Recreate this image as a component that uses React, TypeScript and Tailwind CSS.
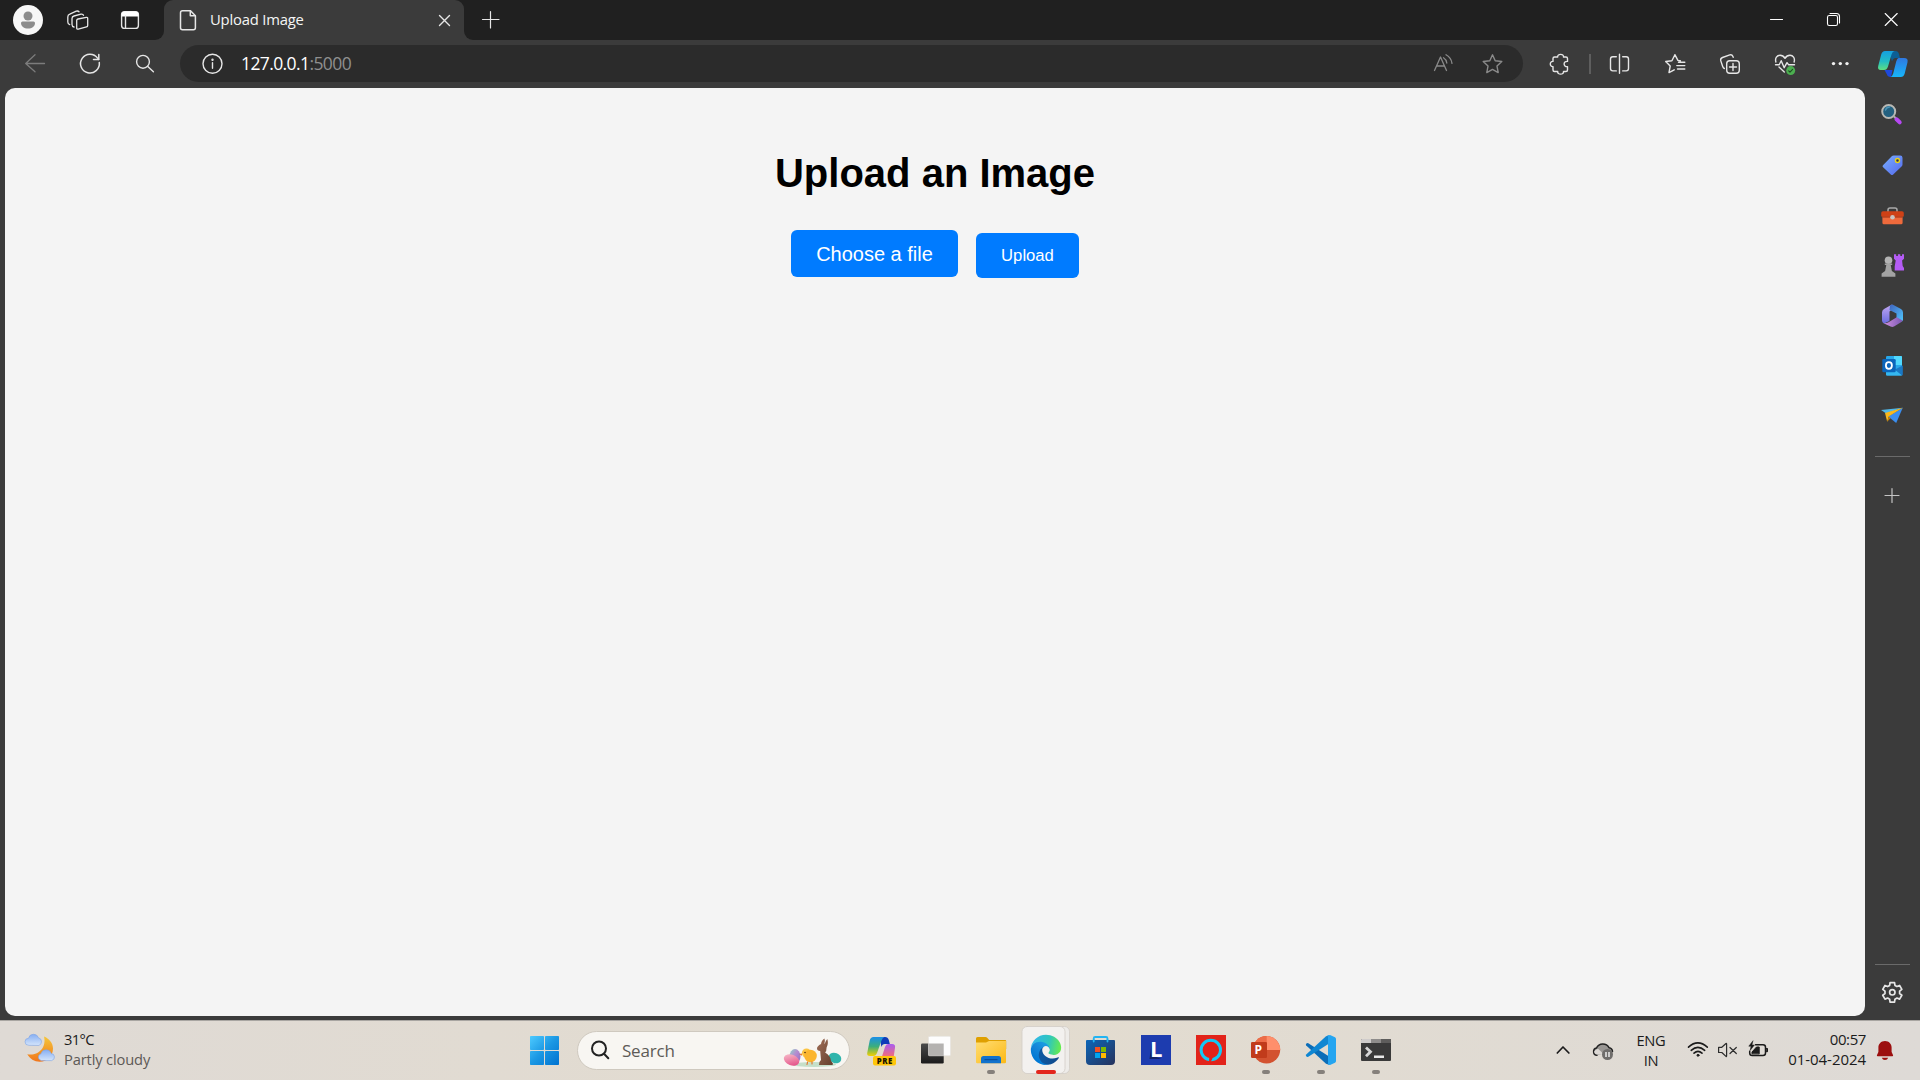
import React from "react";

type CellProps = {
  box: [number, number, number, number];
  color?: string;
  sw?: number;
  children: React.ReactNode;
};

// Icon cell drawn in screen units; it takes part in the flow as a fixed-size block.
function Cell({ box, color = "#e6e6e6", sw = 1.4, children }: CellProps) {
  return (
    <svg
      className="block shrink-0"
      width={box[2]}
      height={box[3]}
      viewBox={box.join(" ")}
      fill="none"
      stroke={color}
      strokeWidth={sw}
      strokeLinecap="round"
      strokeLinejoin="round"
    >
      {children}
    </svg>
  );
}

function gearPath(cx: number, cy: number) {
  const pts: string[] = [];
  for (let k = 0; k < 6; k++) {
    const spec: [number, number][] = [
      [-21, 7.4],
      [-13, 10],
      [13, 10],
      [21, 7.4],
    ];
    for (const [d, r] of spec) {
      const a = ((k * 60 + d - 90) * Math.PI) / 180;
      pts.push(`${(cx + r * Math.cos(a)).toFixed(2)} ${(cy + r * Math.sin(a)).toFixed(2)}`);
    }
  }
  return `M${pts.join("L")}z`;
}

function TabBar() {
  return (
    <div className="flex h-10 bg-[#202020]">
      <Cell box={[0, 0, 52, 40]}>
        <circle cx="28" cy="20" r="15" fill="#f7f7f7" stroke="none" />
        <circle cx="28" cy="16" r="4.5" fill="#8c8c8c" stroke="none" />
        <path d="M21 23a1.5 1.5 0 0 1 1.5-1.5h11A1.5 1.5 0 0 1 35 23c0 3.5-3 5.5-7 5.5s-7-2-7-5.5z" fill="#8c8c8c" stroke="none" />
      </Cell>
      <Cell box={[52, 0, 52, 40]} sw={1.3}>
        <path d="M78 19l8.3-1.6q1.4-.2 1.4 1.1v6.9q0 1.2-1.2 1.5l-8.2 2.2q-1.6.3-1.6-1.2v-7.4q0-1.2 1.3-1.5z" />
        <path d="M74 27q-2-.5-2-2.5v-6q0-2 2-2.5l7-1.9q2-.3 2.5 1.2" />
        <path d="M69.7 24.6q-1.9-.6-1.9-2.6v-5q0-2 2-2.8l6.5-3q1.7-.6 2.7.5" />
      </Cell>
      <Cell box={[104, 0, 50, 40]}>
        <rect x="121.6" y="11.6" width="16.8" height="16.8" rx="3" />
        <path d="M121.5 16.5v-2a3 3 0 0 1 3-3h11a3 3 0 0 1 3 3v2z" fill="#fff" stroke="none" />
        <path d="M125.5 16v12" />
      </Cell>
      <div className="h-10 w-2.5 bg-[#3b3b3b]">
        <div className="h-10 w-2.5 rounded-br-[9px] bg-[#202020]" />
      </div>
      <div className="flex h-10 w-[300px] rounded-t-[9px] bg-[#3b3b3b]">
        <Cell box={[164, 0, 46, 40]} sw={1.5}>
          <path d="M182.5 10.7h8l4.9 5v12a2 2 0 0 1-2 2h-10.9a2 2 0 0 1-2-2v-15a2 2 0 0 1 2-2z" />
          <path d="M190.3 11v4.7h4.8" />
        </Cell>
        <span className="w-[214px] pt-2 text-[14.8px] leading-[22px] tracking-[-0.2px] text-[#f5f5f5]">Upload Image</span>
        <Cell box={[424, 0, 40, 40]}>
          <path d="M439.5 15.5l10 10M449.5 15.5l-10 10" />
        </Cell>
      </div>
      <div className="h-10 w-2.5 bg-[#3b3b3b]">
        <div className="h-10 w-2.5 rounded-bl-[9px] bg-[#202020]" />
      </div>
      <Cell box={[474, 0, 34, 40]} sw={1.2}>
        <path d="M482.5 19.5h16.5M490.5 11.5V28" />
      </Cell>
      <div className="flex-1" />
      <Cell box={[1750, 0, 56, 40]} color="#fff" sw={1.1}>
        <path d="M1770.5 19.5h12" />
      </Cell>
      <Cell box={[1806, 0, 57, 40]} color="#fff" sw={1.1}>
        <rect x="1827.5" y="15.5" width="10" height="10" rx="1.8" />
        <path d="M1830 13.5h6.5q3 0 3 3v6.5" />
      </Cell>
      <Cell box={[1863, 0, 57, 40]} color="#fff" sw={1.1}>
        <path d="M1885.2 13.5l12 12M1897.2 13.5l-12 12" />
      </Cell>
    </div>
  );
}

function Toolbar() {
  return (
    <div className="flex h-12 items-center">
      <Cell box={[0, 40, 63, 48]} color="#7c7c7c" sw={1.3}>
        <path d="M44.5 63.5H26M35 54.8l-9.3 8.7 9.3 8.2" />
      </Cell>
      <Cell box={[63, 40, 55, 48]} sw={1.5}>
        <path d="M99.3 62.5a9.4 9.4 0 1 1-1.7-4.4l1 1.3" />
        <path d="M98.8 54.5v5h-5.3" />
      </Cell>
      <Cell box={[118, 40, 62, 48]} sw={1.4}>
        <circle cx="143" cy="61.8" r="6.4" />
        <path d="M147.8 66.5l5.6 5.2" />
      </Cell>
      <div className="mb-[1px] flex h-[37px] w-[1343px] items-center rounded-full bg-[#2b2b2b]">
        <Cell box={[180, 45, 61, 37]} sw={1.4}>
          <circle cx="212.5" cy="63.7" r="9.5" />
          <path d="M212.5 62.8v5.4" />
          <circle cx="212.5" cy="59.7" r=".5" fill="#e6e6e6" />
        </Cell>
        <div className="flex-1 pb-px text-[17.5px] leading-[24px] tracking-[-0.6px] text-white">
          127.0.0.1<span className="text-[#8f8f8f]">:5000</span>
        </div>
        <Cell box={[1418, 45, 50, 37]} color="#8a8a8a" sw={1.3}>
          <path d="M1434.5 70.5l6-13.5 6 13.5M1436.7 66h7.6M1443.5 57.8q2.8 1.6 3.3 5.2M1446 54.8q5.3 3 6 8.5" />
        </Cell>
        <Cell box={[1468, 45, 55, 37]} color="#8a8a8a" sw={1.4}>
          <path d="M1492.5 54.8l2.7 5.9 6.6.8-4.8 4.6 1.2 6.5-5.7-3.2-5.7 3.2 1.2-6.5-4.8-4.6 6.6-.8z" />
        </Cell>
      </div>
      <Cell box={[1523, 40, 66, 48]}>
        <path d="M1554.500 57h3.200c-.6-3.500 6.400-3.500 5.800 0h2.500q1.500 0 1.500 1.500v2.900c-4.500-.4-4.500 5.600 0 5.200v3.400q0 1.500-1.500 1.500h-2.500c.6 3.500-6.400 3.500-5.800 0h-3.200q-1.500 0-1.500-1.500v-3.400c-3.600.4-3.600-5.600 0-5.200v-2.900q0-1.500 1.500-1.500z" />
      </Cell>
      <div className="h-5 w-[2px] bg-[#5e5e5e]" />
      <Cell box={[1591, 40, 56, 48]}>
        <path d="M1616.3 56.7h-3.5q-2.3 0-2.3 2.3v9.6q0 2.3 2.3 2.3h3.5M1622.7 56.7h3.5q2.3 0 2.3 2.3v9.6q0 2.3-2.3 2.3h-3.5M1619.5 54.3v19" />
      </Cell>
      <Cell box={[1647, 40, 55, 48]}>
        <path d="M1680.300 60.800l-2.400-.400-3-5.700-3 6-6.200.800 4.500 4.500-1.200 6.600 5.200-2.800M1678.500 62.200h6.300M1676.800 65.600h8M1677.500 69h7.300" />
      </Cell>
      <Cell box={[1702, 40, 55, 48]}>
        <rect x="1726.7" y="60.7" width="12.6" height="12.6" rx="3" />
        <path d="M1733 63.5v7M1729.5 67h7M1724.4 68.5q-1.2-.6-1.7-2l-1.9-5.6q-.7-2.5 1.7-3.4l7.3-2.6q2.2-.6 3 1.4l.4 1" />
      </Cell>
      <Cell box={[1757, 40, 55, 48]}>
        <path d="M1775.9 62c-1.2-4 1.2-6.7 4.1-6.7 2.4 0 4 1.4 5 3 1-1.6 2.6-3 5-3 2.900 0 5.300 2.700 4.100 6.700M1775.500 64.700h3.700l2-4 3 7 2.800-5 1.500 2h6M1779 67l5.300 5" />
        <circle cx="1790.7" cy="70.6" r="4.5" fill="#4caf50" stroke="none" />
        <path d="M1788.700 70.800l1.300 1.400 2.600-2.800" stroke="#1f4d22" strokeWidth="1.100" />
      </Cell>
      <Cell box={[1812, 40, 53, 48]}>
        <g fill="#f0f0f0" stroke="none">
          <circle cx="1833.5" cy="63.6" r="1.7" />
          <circle cx="1840.3" cy="63.6" r="1.7" />
          <circle cx="1847" cy="63.6" r="1.7" />
        </g>
      </Cell>
      <Cell box={[1865, 40, 55, 48]}>
        <defs>
          <linearGradient id="cpA" x1="0" y1="0" x2="0" y2="1">
            <stop offset="0" stopColor="#159fe0" />
            <stop offset=".55" stopColor="#22bcc4" />
            <stop offset="1" stopColor="#5fe07f" />
          </linearGradient>
          <linearGradient id="cpB" x1="0" y1="0" x2="0" y2="1">
            <stop offset="0" stopColor="#2f78e0" />
            <stop offset="1" stopColor="#17b6fb" />
          </linearGradient>
        </defs>
        <g stroke="none">
          <path d="M1889 51h6.500q2.700 0 3.500 3l1 4h-4.500q-2.500 0-3.500 3.500z" fill="#0c5f95" />
          <path d="M1884.500 70h8l-1.500 7h-.5q-3 0-3.800-3z" fill="#1e49dc" />
          <path d="M1885 51h9.500q-2 .3-3 3.500l-3.500 12q-1.100 3.500-4 3.500h-3.300q-3.400 0-2.500-4l3-11.500q1-3.500 3.800-3.500z" fill="url(#cpA)" />
          <path d="M1898.500 58h5.500q4.400 0 3.500 4.200l-2.800 11.300q-1 3.500-4 3.500h-10.200q1.800-.5 2.700-3.500l3-12q1-3.500 2.300-3.500z" fill="url(#cpB)" />
        </g>
      </Cell>
    </div>
  );
}

function Sidebar() {
  return (
    <div className="flex w-[55px] flex-col">
      <Cell box={[1865, 88, 55, 52]}>
        <circle cx="1888.700" cy="111.500" r="6.500" fill="#23607f" stroke="#b8b8b4" strokeWidth="2" />
        <path d="M1885.500 110q1-3 4-3" stroke="#4c93b5" />
        <path d="M1894 116.500l2 2" stroke="#aaa" strokeWidth="2" />
        <path d="M1896.500 119.300l3.200 3" stroke="#b648f2" strokeWidth="4" />
      </Cell>
      <Cell box={[1865, 140, 55, 51]}>
        <defs>
          <linearGradient id="tag" x1="0" y1="0" x2="1" y2="1">
            <stop offset="0" stopColor="#79b0ff" />
            <stop offset="1" stopColor="#5468ec" />
          </linearGradient>
        </defs>
        <path d="M1883 165.300l9-9.200q.7-.7 1.700-.7h6.500q2.300 0 2.300 2.300v6.800q0 1-.7 1.700l-8.600 8.300q-1.200 1-2.400 0l-7.700-7.200q-1.200-1-.1-2z" fill="url(#tag)" stroke="none" />
        <circle cx="1897.500" cy="160.500" r="2" fill="#2e3554" stroke="#ead21a" />
      </Cell>
      <Cell box={[1865, 191, 55, 50]}>
        <path d="M1888 211.500v-1.500q0-2 2-2h5q2 0 2 2v1.500" stroke="#a9a9a9" strokeWidth="1.500" />
        <g stroke="none">
          <rect x="1882.400" y="212" width="20.200" height="12.200" rx="1.500" fill="#ee6a3c" />
          <path d="M1881.200 213q0-1.800 1.800-1.800h19q1.800 0 1.800 1.800v3.500h-22.600z" fill="#cf4116" />
          <path d="M1882.400 216.500h20.200v1h-20.200z" fill="#9d2f10" />
          <circle cx="1892.500" cy="217.200" r="2.300" fill="#c9c5c2" />
        </g>
      </Cell>
      <Cell box={[1865, 241, 55, 50]}>
        <g stroke="none">
          <path d="M1894 254.300h2.200v1.600h1.700v-1.600h2.400v1.600h1.700v-1.600h2v4.500l-1.900 1.600.6 5.600 1.300 2v2.500h-9.300v-4l1-6-1.700-1.700z" fill="#b45cf5" />
          <circle cx="1888.500" cy="260.300" r="3.800" fill="#b4b4b4" />
          <path d="M1884.800 263.500h7.400v1.500h-1.500l1.200 6 3.500 2.500v3.200h-13.800v-3.200l3.500-2.500 1.200-6h-1.500z" fill="#a3a3a3" />
        </g>
      </Cell>
      <Cell box={[1865, 291, 55, 50]}>
        <defs>
          <linearGradient id="mA" x1="0" y1="0" x2="0" y2="1">
            <stop offset="0" stopColor="#c3a8f2" />
            <stop offset="1" stopColor="#6a6be0" />
          </linearGradient>
          <linearGradient id="mB" x1="0" y1="0" x2="1" y2="1">
            <stop offset="0" stopColor="#3f62bd" />
            <stop offset="1" stopColor="#50c8ff" />
          </linearGradient>
          <linearGradient id="mC" x1="0" y1="0" x2="1" y2="0">
            <stop offset="0" stopColor="#d08fe0" />
            <stop offset="1" stopColor="#7a58b4" />
          </linearGradient>
        </defs>
        <g stroke="none">
          <path d="M1892 304.500l-8 4.500q-2 1-2 3.500v8q0 2 2 3l5.500-2.500v-9.500l4-3.500z" fill="url(#mA)" />
          <path d="M1890 305.200l2.500-.8 8.500 4.600q2 1.200 2 3.500v7.500q-.3 1.300-1.500 1.600l-5-3v-5.200l-7-3.500z" fill="url(#mB)" />
          <path d="M1883.500 323.200q3 .2 5-1l8.300-4.900 5.800 3.200q0 .8-1.600 1.800l-7 4.200q-1.700.9-3.400 0z" fill="url(#mC)" />
        </g>
      </Cell>
      <Cell box={[1865, 341, 55, 50]}>
        <g stroke="none">
          <rect x="1886" y="356" width="16" height="19.500" rx="1.200" fill="#28a8ea" />
          <path d="M1894 356h7q1 0 1 1v8h-8z" fill="#50d9ff" />
          <path d="M1894 370l8.800-4.500v9q0 1-1 1z" fill="#1a78c4" />
          <path d="M1886 368l8 1 8 6.500h-15q-1 0-1-1z" fill="#35b8f1" />
          <rect x="1882.300" y="359" width="13.400" height="13.300" rx="1.300" fill="#0b65bb" />
        </g>
        <ellipse cx="1888.900" cy="365.500" rx="3" ry="3.300" stroke="#fff" strokeWidth="1.800" />
      </Cell>
      <Cell box={[1865, 391, 55, 50]}>
        <g stroke="none">
          <path d="M1881 410l21.800-2.200-16.500 5.800z" fill="#4fb7e8" />
          <path d="M1902.800 407.800l-6.600 15.200-8-6.500z" fill="#3a8ef0" />
          <path d="M1902.800 407.800l-17.800 5.200 2.200 8.800 1.500-5.300z" fill="#f9b81c" />
          <path d="M1888.700 416.500l2 1.600-3.500 3.700z" fill="#c98308" />
        </g>
      </Cell>
      <div className="mx-2.5 mt-[15px] h-px bg-[#6a6a6a]" />
      <Cell box={[1865, 457, 55, 78]} color="#c4c4c4" sw={1.200}>
        <path d="M1885 495.500h14M1892 488.500v14" />
      </Cell>
      <div className="flex-1" />
      <div className="mx-2.5 h-px bg-[#6a6a6a]" />
      <Cell box={[1865, 965, 55, 55]} sw={1.700}>
        <path d={gearPath(1892.300, 992.300)} />
        <circle cx="1892.300" cy="992.300" r="2.700" />
      </Cell>
    </div>
  );
}

function Page() {
  return (
    <main className="ml-[5px] flex h-[928px] w-[1860px] flex-col items-center rounded-[10px] bg-[#f4f4f4] [font-family:'Liberation_Sans',Arial,sans-serif]">
      <h1 className="mt-[62px] text-[40px] leading-[46px] font-bold text-black">Upload an Image</h1>
      <div className="mt-[34px] flex gap-[18px] text-white">
        <button className="h-[47px] w-[167px] rounded-[6px] bg-[#007bff] pt-[2px] text-[20px] leading-[23px]">Choose a file</button>
        <button className="mt-[3px] h-[45px] w-[103px] rounded-[6px] bg-[#007bff] text-[16.670px] leading-5">Upload</button>
      </div>
    </main>
  );
}

function Indicator({ cx }: { cx: number }) {
  return <rect x={cx - 4} y="1070" width="8" height="4" rx="2" fill="#85807b" stroke="none" />;
}

function Taskbar() {
  return (
    <div className="flex h-[60px] w-[1920px] border-t border-[#a9a6a2] bg-linear-to-r from-[#dfdad5] via-[#e3dccf] to-[#dedad6] text-[#1b1b1b]">
      <Cell box={[0, 1021, 64, 59]}>
        <defs>
          <linearGradient id="moon" x1="0" y1="0" x2="0" y2="1">
            <stop offset="0" stopColor="#f5c63a" />
            <stop offset="1" stopColor="#f0761c" />
          </linearGradient>
          <linearGradient id="cloud" x1="0" y1="0" x2="0" y2="1">
            <stop offset="0" stopColor="#86aef2" />
            <stop offset="1" stopColor="#d3e4fb" />
          </linearGradient>
        </defs>
        <path d="M44 1036.500c5 2 9 6.500 9 12 0 7.500-6 13.200-13.200 13.200-5.500 0-10-3-12.500-7.500 10.500 2 19.500-6 16.700-17.700z" fill="url(#moon)" stroke="none" />
        <path d="M28.500 1045.300a3.500 3.500 0 0 1 0-7 5.200 5.200 0 0 1 10-.5 4 4 0 0 1 .8 7.500z" fill="url(#cloud)" stroke="#7fa4e4" strokeWidth=".6" />
        <path d="M41 1060.500a3.500 3.500 0 0 1 0-6.800 5.300 5.300 0 0 1 10.200-.2 3.600 3.600 0 0 1 .8 7z" fill="url(#cloud)" stroke="#7fa4e4" strokeWidth=".6" />
      </Cell>
      <div className="w-[453px] pt-[8px] text-[14.700px] leading-[20px]">
        <div className="tracking-[-0.600px]">31°C</div>
        <div className="tracking-[-0.150px] text-[#5d5956]">Partly cloudy</div>
      </div>
      <Cell box={[517, 1021, 60, 59]}>
        <defs>
          <linearGradient id="win" gradientUnits="userSpaceOnUse" x1="530" y1="1036" x2="559" y2="1065">
            <stop offset="0" stopColor="#4dcaff" />
            <stop offset=".5" stopColor="#1a97e3" />
            <stop offset="1" stopColor="#0072d0" />
          </linearGradient>
        </defs>
        <g fill="url(#win)" stroke="none">
          <rect x="530" y="1036" width="14" height="14" rx=".8" />
          <rect x="545" y="1036" width="14" height="14" rx=".8" />
          <rect x="530" y="1051" width="14" height="14" rx=".8" />
          <rect x="545" y="1051" width="14" height="14" rx=".8" />
        </g>
      </Cell>
      <div className="mt-[10px] flex h-[39px] w-[273px] items-center rounded-full border border-[#cfc9bf] bg-[#f8f6f2]">
        <Cell box={[578, 1032, 44, 37]} color="#222" sw={2}>
          <circle cx="599" cy="1048.500" r="7" />
          <path d="M604 1053.700l4.300 4.500" />
        </Cell>
        <span className="flex-1 text-[17px] leading-6 tracking-[-0.200px] text-[#5e5b57]">Search</span>
        <Cell box={[780, 1032, 69, 37]}>
          <defs>
            <linearGradient id="eggA" x1="0" y1="0" x2="1" y2="1">
              <stop offset="0" stopColor="#8ed6c8" />
              <stop offset=".45" stopColor="#b58bd0" />
              <stop offset="1" stopColor="#8d6cc0" />
            </linearGradient>
            <linearGradient id="eggB" x1="0" y1="0" x2="1" y2="1">
              <stop offset="0" stopColor="#f9c6cf" />
              <stop offset="1" stopColor="#e0407e" />
            </linearGradient>
            <linearGradient id="bunny" x1="0" y1="0" x2="1" y2="1">
              <stop offset="0" stopColor="#a06d55" />
              <stop offset="1" stopColor="#63402f" />
            </linearGradient>
          </defs>
          <g stroke="none">
            <ellipse cx="814" cy="1064.500" rx="22" ry="2.500" fill="#c5dfca" />
            <ellipse cx="795" cy="1056.500" rx="5.500" ry="7.500" fill="url(#eggA)" />
            <ellipse cx="791.500" cy="1060" rx="8" ry="5.300" transform="rotate(20 791.500 1060)" fill="url(#eggB)" />
            <ellipse cx="835" cy="1058" rx="6.500" ry="5" transform="rotate(20 835 1058)" fill="#2fb5ac" />
            <circle cx="806.500" cy="1053" r="4.600" fill="#fcc443" />
            <ellipse cx="810.500" cy="1056" rx="6.300" ry="6.200" fill="#fbb52e" />
            <path d="M801.800 1053.500l-2.600.6 2.800 1.600z" fill="#e2691a" />
            <circle cx="805" cy="1052.500" r=".8" fill="#4a2a10" />
          </g>
          <path d="M807.500 1062l-.5 2.500M812 1062v2" stroke="#e2691a" strokeWidth="1" />
          <path d="M819 1065q-.5-3 2-5l-.8-9q-3.200-.5-3.200-2.500 0-2.500 4-4.500.5-4 3.500-5.500 1 3-.2 5.500l.5-.5q1.200-3.500 2.500-4.500 1.500 4.500-.7 8.500 0 3.500-1.500 5 5.500 3 6 8.500l1.800 2.500q.3 1.500-1 1.500z" fill="url(#bunny)" stroke="none" />
        </Cell>
      </div>
      <Cell box={[850, 1021, 59, 59]}>
        <defs>
          <linearGradient id="cpC" x1="0" y1="0" x2="0" y2="1">
            <stop offset="0" stopColor="#1a8fe8" />
            <stop offset=".5" stopColor="#3cae7c" />
            <stop offset="1" stopColor="#f5d000" />
          </linearGradient>
          <linearGradient id="cpD" x1="0" y1="0" x2="0" y2="1">
            <stop offset="0" stopColor="#a95cf0" />
            <stop offset="1" stopColor="#fb6f6b" />
          </linearGradient>
        </defs>
        <g stroke="none">
          <path d="M880 1037h5q3 0 3.800 3l1 4h-5q-2.500 0-3.500 3z" fill="#0f3bb8" />
          <path d="M873.500 1037h11q-2 .5-3 3.500l-4.300 12q-1.200 3.500-4 3.500h-3.200q-3.500 0-2.700-3.500l2.400-12q.8-3.500 3.800-3.500z" fill="url(#cpC)" />
          <path d="M888 1044h4q3.700 0 3 3.700l-1.500 10.300h-12l3.500-11q1-3 3-3z" fill="url(#cpD)" />
          <rect x="873" y="1056" width="23" height="9.500" rx="2" fill="#ffc60a" />
          <text x="884.800" y="1063.500" fontSize="7.800" fontWeight="800" textAnchor="middle" letterSpacing=".5" fill="#1c1600" className="[font-family:'Open_Sans',sans-serif]">PRE</text>
        </g>
      </Cell>
      <Cell box={[909, 1021, 55, 59]}>
        <defs>
          <linearGradient id="tvD" x1="0" y1="0" x2="0" y2="1">
            <stop offset="0" stopColor="#4a4a4a" />
            <stop offset="1" stopColor="#1b1b1b" />
          </linearGradient>
        </defs>
        <rect x="921" y="1043.500" width="22.700" height="20" rx="1.200" fill="url(#tvD)" stroke="none" />
        <rect x="928.500" y="1036.300" width="22" height="19.500" rx="1.200" fill="#fdfdfd" stroke="#e4e1dd" strokeWidth=".6" />
        <path d="M928.500 1043.500h15.200v12.300h-15.200z" fill="#b4b2b0" stroke="none" />
      </Cell>
      <Cell box={[964, 1021, 55, 59]}>
        <defs>
          <linearGradient id="fold" x1="0" y1="0" x2="1" y2="1">
            <stop offset="0" stopColor="#ffdd73" />
            <stop offset="1" stopColor="#fcb915" />
          </linearGradient>
        </defs>
        <g stroke="none">
          <path d="M976 1038.500q0-1.500 1.500-1.500h8q1 0 1.700.8l2 2.200h16q1 0 1 1v8h-30.200z" fill="#dfa000" />
          <path d="M976 1042.500h10l3-1.500h17v21q0 1.300-1.300 1.300h-27.400q-1.300 0-1.300-1.300z" fill="url(#fold)" />
          <path d="M981 1063.300v-4.800q0-2.500 2.500-2.500h15q2.500 0 2.500 2.500v4.800z" fill="#1272cc" />
          <path d="M984.500 1059h13v1.200h-13z" fill="#0b4f9b" />
        </g>
        <Indicator cx={991} />
      </Cell>
      <Cell box={[1019, 1021, 55, 59]}>
        <defs>
          <linearGradient id="edA" gradientUnits="userSpaceOnUse" x1="60" y1="180" x2="240" y2="180">
            <stop offset="0" stopColor="#0c59a4" />
            <stop offset="1" stopColor="#114a8b" />
          </linearGradient>
          <linearGradient id="edB" gradientUnits="userSpaceOnUse" x1="150" y1="95" x2="45" y2="220">
            <stop offset="0" stopColor="#1b9de2" />
            <stop offset=".5" stopColor="#1485d8" />
            <stop offset="1" stopColor="#0078d4" />
          </linearGradient>
          <linearGradient id="edC" gradientUnits="userSpaceOnUse" x1="20" y1="70" x2="255" y2="120">
            <stop offset="0" stopColor="#32b7e8" />
            <stop offset=".55" stopColor="#2fc6be" />
            <stop offset="1" stopColor="#66eb4e" />
          </linearGradient>
        </defs>
        <rect x="1050" y="1026.500" width="19.500" height="47" rx="5" fill="#eeece9" stroke="#d2cdc7" strokeWidth=".8" />
        <rect x="1022" y="1026.500" width="43" height="47" rx="5" fill="#f3f1ef" stroke="#d2cdc7" strokeWidth=".8" />
        <g transform="translate(1030.800 1034.700) scale(.1185) translate(-4.630 -4.920)" stroke="none">
          <path fill="url(#edA)" d="M235.680 195.460a93.730 93.730 0 0 1-10.540 4.710 101.870 101.870 0 0 1-35.900 6.460c-47.320 0-88.540-32.550-88.540-74.320A31.480 31.480 0 0 1 117.130 105c-42.800 1.800-53.800 46.400-53.800 72.530 0 73.880 68.090 81.370 82.760 81.370 7.910 0 19.840-2.300 27-4.560l1.310-.44a128.340 128.340 0 0 0 66.600-52.800 4 4 0 0 0-5.320-5.640z" />
          <path fill="url(#edB)" d="M110.340 246.340A79.200 79.200 0 0 1 87.600 225a80.720 80.720 0 0 1 29.530-120c3.120-1.470 8.450-4.130 15.540-4a32.350 32.350 0 0 1 25.690 13 31.880 31.880 0 0 1 6.360 18.660c0-.21 24.460-79.600-80-79.600-43.900 0-80 41.660-80 78.210a130.150 130.150 0 0 0 12.110 56 128 128 0 0 0 156.380 67.110 75.550 75.550 0 0 1-62.780-8z" />
          <path fill="url(#edC)" d="M156.940 153.780c-.81 1.050-3.300 2.500-3.300 5.660 0 2.610 1.700 5.120 4.720 7.230 14.380 10 41.490 8.680 41.560 8.680a59.560 59.560 0 0 0 30.270-8.350A61.380 61.380 0 0 0 260.630 114.100c.26-22.410-8-37.310-11.340-43.910C228.090 28.760 182.350 4.920 132.610 4.920a128 128 0 0 0-128 126.200c.48-36.540 36.800-66.050 80-66.050 3.500 0 23.460.34 42 10.070 16.340 8.580 24.900 18.940 30.850 29.210 6.180 10.670 7.280 24.150 7.280 29.520s-2.740 13.330-7.800 19.910z" />
        </g>
        <rect x="1036" y="1070" width="20" height="4" rx="2" fill="#e3261c" stroke="none" />
      </Cell>
      <Cell box={[1074, 1021, 55, 59]}>
        <defs>
          <linearGradient id="store" x1="0" y1="0" x2="1" y2="1">
            <stop offset="0" stopColor="#0c66b8" />
            <stop offset="1" stopColor="#27325c" />
          </linearGradient>
        </defs>
        <path d="M1093.700 1042v-3.500q0-1.500 1.500-1.500h10.800q1.500 0 1.500 1.500v3.500" stroke="#22b4f2" strokeWidth="1.800" />
        <g stroke="none">
          <path d="M1086 1041q0-1 1-1h27q1 0 1 1v20q0 4-4 4h-21q-4 0-4-4z" fill="url(#store)" />
          <rect x="1095" y="1047" width="5" height="5" fill="#f25022" />
          <rect x="1101" y="1047" width="5" height="5" fill="#7fba00" />
          <rect x="1095" y="1053" width="5" height="5" fill="#00a4ef" />
          <rect x="1101" y="1053" width="5" height="5" fill="#ffb900" />
        </g>
        <path d="M1093.700 1040v1.500M1107.500 1040v1.500" stroke="#22b4f2" strokeWidth="1.800" />
      </Cell>
      <Cell box={[1129, 1021, 55, 59]}>
        <rect x="1141" y="1035" width="30" height="30" fill="#1d3caf" stroke="none" />
        <path d="M1152 1041l-2.500 18h12l-8-3z" fill="#122567" stroke="none" />
        <text x="1150" y="1056.500" fontSize="22" fontWeight="700" fill="#fff" stroke="none" className="[font-family:'Open_Sans',sans-serif]">L</text>
      </Cell>
      <Cell box={[1184, 1021, 55, 59]}>
        <rect x="1196" y="1035" width="30" height="30" fill="#e2231a" stroke="none" />
        <circle cx="1210.800" cy="1050" r="9.700" stroke="#14c8f5" strokeWidth="3" />
        <path d="M1209 1062.500l.2-5 3.800-.4q-1 3.400-3 5.400z" fill="#e2231a" stroke="none" />
      </Cell>
      <Cell box={[1239, 1021, 55, 59]}>
        <g stroke="none">
          <circle cx="1266.500" cy="1049.800" r="13.700" fill="#d35230" />
          <path d="M1252.800 1050a13.700 13.700 0 0 1 13.700-13.900v13.900z" fill="#ed6c47" />
          <path d="M1266.500 1036.100a13.700 13.700 0 0 1 13.700 13.900h-13.700z" fill="#ff8f6b" />
          <rect x="1251" y="1042" width="16" height="16" rx="1.300" fill="#c13b1b" />
          <text x="1258.200" y="1054.300" fontSize="12" fontWeight="700" textAnchor="middle" fill="#fff" className="[font-family:'Open_Sans',sans-serif]">P</text>
        </g>
        <Indicator cx={1266} />
      </Cell>
      <Cell box={[1294, 1021, 55, 59]}>
        <g stroke="none">
          <path d="M1308.300 1043.200q-1-.6-1.800.2l-.300.300q-.8.900 0 1.800l19.800 18.200 3 1.100.5-8z" fill="#0b6db8" />
          <path d="M1308.300 1056.800q-1 .6-1.800-.2l-.300-.3q-.8-.9 0-1.800l19.800-18.200 3-1.100.5 8z" fill="#0f86d2" />
          <path d="M1329 1035.200q.8-.4 1.600 0l4.400 2.100q1 .5 1 1.600v22.200q0 1.100-1 1.600l-4.400 2.100q-1.600.6-2.900-.7.300.1.300-1.300v-25.600q0-1.500-1-1.200.8-.6 2-.8z" fill="#25a5f0" />
        </g>
        <Indicator cx={1321} />
      </Cell>
      <Cell box={[1349, 1021, 55, 59]}>
        <g stroke="none">
          <rect x="1361" y="1039" width="30" height="22" rx="1" fill="#3a3a3a" />
          <path d="M1361 1040q0-1 1-1h9v4h-10z" fill="#cfcccb" />
          <path d="M1371 1039h10v4h-10z" fill="#8e8c8b" />
          <path d="M1381 1039h9q1 0 1 1v3h-10z" fill="#5e5d5c" />
          <rect x="1374" y="1055.500" width="10" height="2.500" fill="#e9e9e9" />
        </g>
        <path d="M1366 1047.500l4.500 4.300-4.500 4.500" stroke="#d6d6d6" strokeWidth="2.800" strokeLinecap="butt" strokeLinejoin="miter" />
        <Indicator cx={1376} />
      </Cell>
      <div className="flex-1" />
      <Cell box={[1543, 1021, 40, 59]} color="#1b1b1b" sw={1.700}>
        <path d="M1557.300 1053l5.700-6 5.900 6" />
      </Cell>
      <Cell box={[1583, 1021, 44, 59]} color="#222" sw={1.500}>
        <path d="M1597 1055.300a3.700 3.700 0 0 1-.5-7.300 7 7 0 0 1 12.500-.3 4 4 0 0 1 3.500 3.800" fill="#9a9794" />
        <path d="M1597 1054.600q-3-.3-2.700-3 1-3 4-2.600l6 5.600z" fill="#dcd8d4" stroke="none" />
        <circle cx="1607.500" cy="1054.500" r="5.500" fill="#6f6d6b" stroke="none" />
        <path d="M1606 1052v5M1609 1052v5" stroke="#fff" strokeWidth="1.300" strokeLinecap="butt" />
      </Cell>
      <div className="w-12 pt-[9px] text-center text-[14.700px] leading-[20px] tracking-[-0.300px]">
        <div>ENG</div>
        <div>IN</div>
      </div>
      <Cell box={[1675, 1021, 38, 59]} color="#1b1b1b" sw={1.600}>
        <path d="M1688.500 1047.200q9.300-8.500 18.800 0M1691.200 1050.300q6.700-6 13.500 0M1694 1053.200q4-3.500 8 0" />
        <circle cx="1698" cy="1055.300" r="1" fill="#1b1b1b" strokeWidth="1" />
      </Cell>
      <Cell box={[1713, 1021, 29, 59]} color="#2c2c2c" sw={1.200}>
        <path d="M1718.600 1047.300h3.200l4.200-3.800q.6-.3.600.5v12q0 .8-.6.400l-4.200-3.900h-3.200z" />
        <path d="M1730 1047.500l6.300 6M1736.300 1047.500l-6.300 6" />
      </Cell>
      <Cell box={[1742, 1021, 34, 59]} color="#1b1b1b" sw={1.500}>
        <path d="M1755.500 1044.800h7.500q2.500 0 2.500 2.500v5.800q0 2.500-2.500 2.500h-10.800q-2.500 0-2.500-2.500v-1.800" />
        <path d="M1766.500 1048.500h1v3.200h-1z" fill="#1b1b1b" strokeWidth="1" />
        <path d="M1752 1053.500v-1.500l4.500-5h2.700v6.500z" fill="#1b1b1b" strokeWidth="1" />
        <path d="M1752.800 1041l-4 5.200h2.300l-1 4.300 4.300-5.500h-2.300z" fill="#1b1b1b" strokeWidth=".5" />
      </Cell>
      <div className="w-[90px] pt-[8px] text-right text-[15px] leading-[20px]">
        <div className="tracking-[-0.400px]">00:57</div>
        <div className="whitespace-nowrap tracking-[-0.050px]">01-04-2024</div>
      </div>
      <Cell box={[1866, 1021, 54, 59]}>
        <path d="M1885 1041c4 0 6.600 2.900 6.600 6.600v4.400l1.500 3.200q.2 1-.8 1h-14.600q-1 0-.8-1l1.500-3.200v-4.400c0-3.700 2.600-6.600 6.600-6.600zM1881.800 1057.700h6.400q-.8 2.300-3.200 2.300t-3.200-2.300z" fill="#9c0f0f" stroke="none" />
      </Cell>
    </div>
  );
}

export default function App() {
  return (
    <div className="flex h-[1080px] w-[1920px] flex-col overflow-hidden bg-[#3b3b3b] [font-family:'Open_Sans','Noto_Sans',sans-serif]">
      <TabBar />
      <Toolbar />
      <div className="flex h-[932px]">
        <Page />
        <Sidebar />
      </div>
      <Taskbar />
    </div>
  );
}
